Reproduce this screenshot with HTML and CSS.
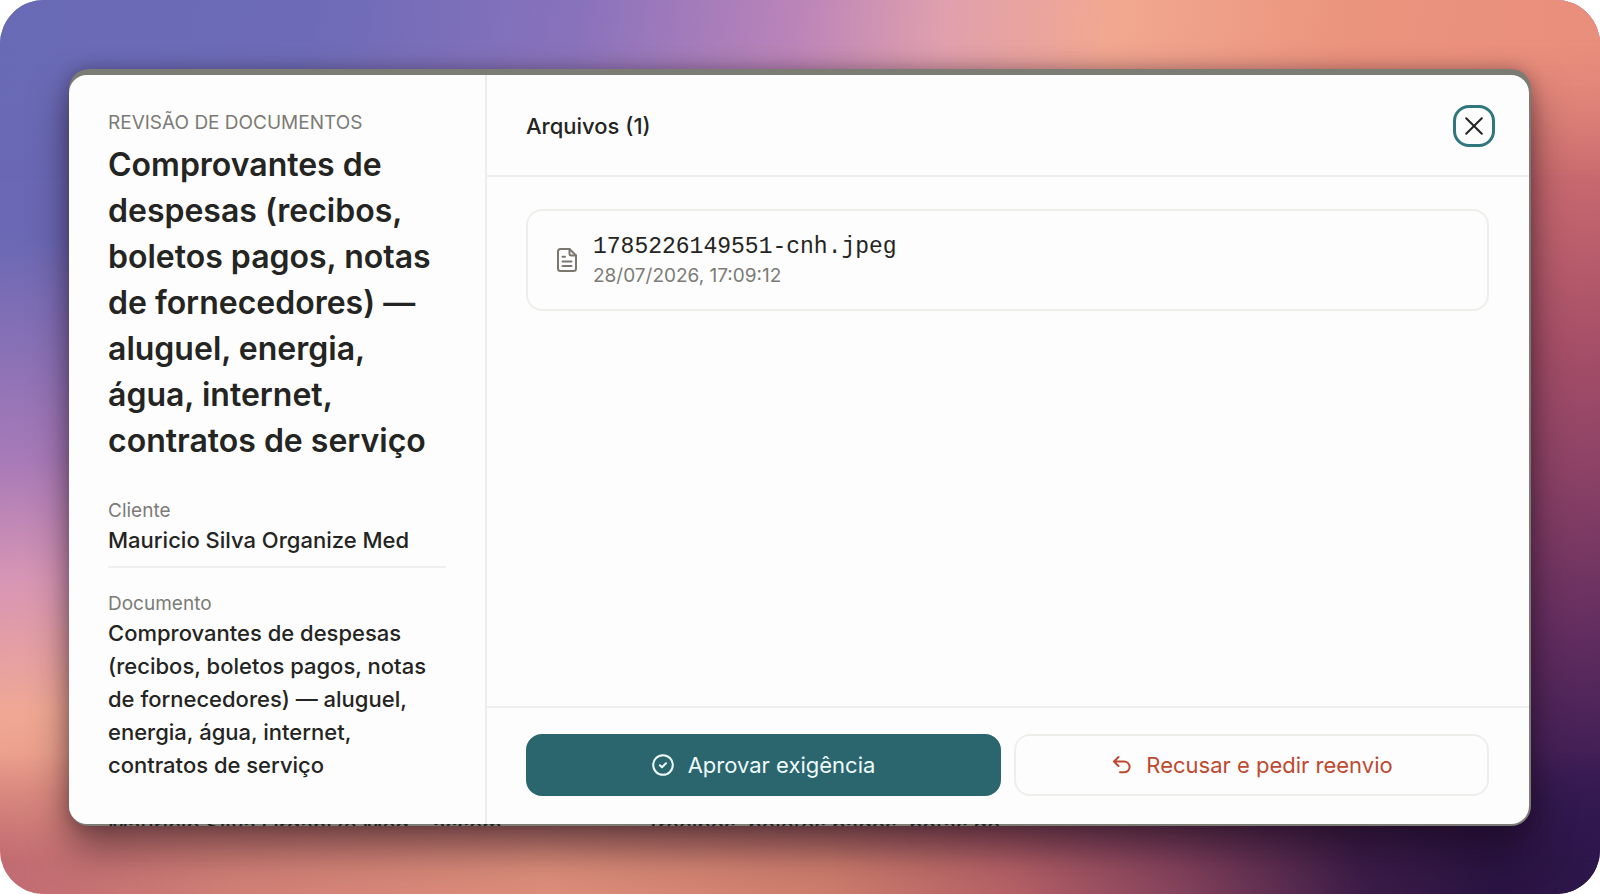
FILE: index.html
```
<!DOCTYPE html>
<html lang="pt-BR">
  <head>
    <meta charset="UTF-8" />
    <meta name="viewport" content="width=device-width, initial-scale=1.0" />
    <title>Revisão de documentos</title>
    <link rel="stylesheet" href="styles.css" />
  </head>
  <body>
    <div class="backdrop">
      <div class="window">
        <!-- row of the list page that stays behind the dialog -->
        <div class="behind" aria-hidden="true">
          <span>Mauricio Silva Organize Med</span>
          <span class="behind-type">assem…</span>
          <span class="behind-doc">(recibos, boletos pagos, notas de</span>
        </div>

        <div class="dialog" role="dialog" aria-labelledby="dialogTitle">
          <aside class="sidebar">
            <p class="eyebrow">REVISÃO DE DOCUMENTOS</p>
            <h1 id="dialogTitle">
              Comprovantes de despesas (recibos, boletos pagos, notas de
              fornecedores) — aluguel, energia, água, internet, contratos de
              serviço
            </h1>
            <dl class="details">
              <div class="detail">
                <dt>Cliente</dt>
                <dd>Mauricio Silva Organize Med</dd>
              </div>
              <div class="detail">
                <dt>Documento</dt>
                <dd>
                  Comprovantes de despesas (recibos, boletos pagos, notas de
                  fornecedores) — aluguel, energia, água, internet, contratos
                  de serviço
                </dd>
              </div>
            </dl>
          </aside>

          <section class="main">
            <header class="header">
              <h2>Arquivos (1)</h2>
              <button type="button" class="close" aria-label="Fechar">
                <svg width="18" height="18" viewBox="0 0 18 18">
                  <path d="M1.2 1.2 16.8 16.8M16.8 1.2 1.2 16.8" />
                </svg>
              </button>
            </header>

            <div class="files">
              <div class="file">
                <svg class="file-icon" width="22" height="26" viewBox="0 0 22 26">
                  <path
                    d="M4.5 2H13.5L20 8.5V21.5A2.5 2.5 0 0 1 17.5 24H4.5A2.5 2.5 0 0 1 2 21.5V4.5A2.5 2.5 0 0 1 4.5 2Z"
                  />
                  <path d="M13.5 2V6.5A2 2 0 0 0 15.5 8.5H20" />
                  <path d="M6.5 9.8H9M6.5 14.5H15.5M6.5 19H15.5" />
                </svg>
                <div>
                  <p class="file-name">1785226149551-cnh.jpeg</p>
                  <p class="file-date">28/07/2026, 17:09:12</p>
                </div>
              </div>
            </div>

            <footer class="actions">
              <button type="button" class="btn approve">
                <svg width="22" height="22" viewBox="0 0 22 22">
                  <circle cx="11" cy="11" r="9.8" />
                  <path d="M7.9 11.2 10 13.2 14 9.2" />
                </svg>
                Aprovar exigência
              </button>
              <button type="button" class="btn reject">
                <svg width="22" height="22" viewBox="0 0 22 22">
                  <path d="M8.5 3 4 7.5 8.5 12M4 7.5H14.2A5.4 5.4 0 0 1 14.2 18.3H10" />
                </svg>
                Recusar e pedir reenvio
              </button>
            </footer>
          </section>
        </div>
      </div>
    </div>
  </body>
</html>
```
FILE: styles.css
```
* {
  margin: 0;
  padding: 0;
  box-sizing: border-box;
}

body {
  background-color: #fff;
  color: #242422;
  font-family: Inter, "Liberation Sans", Arial, sans-serif;
  font-size: 22px;
  line-height: 33px;
}

.backdrop {
  position: relative;
  display: flex;
  min-height: 100vh;
  padding: 69px 69px 68px;
  overflow: hidden;
  border-radius: 44px;
  background: linear-gradient(176deg, #696ab5 0%, #6b68b4 24%, #a87ab8 46%, #d896b4 58%, #f0a894 71%, #dd8878 88%, #c06a72 100%);
}

/* right side and top/bottom colours, faded into the left one */
.backdrop::before,
.backdrop::after {
  content: "";
  position: absolute;
  inset: 0;
}

.backdrop::before {
  background: linear-gradient(172deg, #e88d7c 0%, #e4877a 18%, #cc6c70 34%, #a85068 50%, #8c4266 62%, #642e60 76%, #3a1c54 90%, #2f1850 100%);
  mask-image: linear-gradient(to right, transparent 10%, #000 90%);
}

.backdrop::after {
  background:
    linear-gradient(98deg, #696ab5 0%, #6d6bb7 19%, #8972bc 35%, #bb84b9 48%, #e0a0ad 57%, #f2a890 67%, #eb947d 81%, #e88d7c 100%) top / 100% 50% no-repeat,
    linear-gradient(82deg, #c06a72 0%, #d07f76 14%, #dc8e7a 33%, #cc7c6c 50%, #b46066 61%, #84425c 71%, #3c1c48 82%, #2a1442 90%, #2f1850 100%) bottom / 100% 50% no-repeat;
  mask-image: linear-gradient(to bottom, #000 0, #000 40px, transparent 180px, transparent calc(100% - 140px), #000 calc(100% - 30px));
}

.window {
  position: relative;
  z-index: 1;
  display: flex;
  flex: 1;
  padding: 6px 2px 2px 0;
  border-radius: 20px;
  background-color: #7b7c74;
  box-shadow: 0 22px 38px rgba(20, 5, 20, 0.5), 0 0 16px rgba(20, 5, 20, 0.25);
}

.behind {
  position: absolute;
  right: 0;
  bottom: 0;
  left: 39px;
  display: flex;
  height: 16px;
  overflow: hidden;
  color: #242422;
  font-weight: 500;
  white-space: nowrap;
}

.behind-type {
  margin-left: 24px;
}

.behind-doc {
  margin-left: 128px;
}

.dialog {
  position: relative;
  display: flex;
  flex: 1;
  border-radius: 18px;
  background-color: #fdfdfd;
}

.sidebar {
  width: 418px;
  padding: 35px 39px 32px;
  border-right: 2px solid #ededeb;
}

.eyebrow,
dt,
.file-date {
  color: #7c7b76;
  font-size: 19px;
  line-height: 26px;
}

h1 {
  margin-top: 6px;
  font-size: 32px;
  font-weight: 600;
  line-height: 46px;
}

.details {
  margin-top: 34px;
}

.detail {
  padding-bottom: 9px;
  border-bottom: 2px solid #f0f0ee;
}

.detail + .detail {
  padding-top: 23px;
  border-bottom: none;
}

dd,
h2 {
  font-size: 22px;
  font-weight: 500;
  line-height: 33px;
}

.main {
  display: flex;
  flex: 1;
  flex-direction: column;
}

.header {
  display: flex;
  align-items: center;
  justify-content: space-between;
  padding: 30px 34px 28px 39px;
  border-bottom: 2px solid #efefed;
}

button {
  font-family: inherit;
  cursor: pointer;
}

svg {
  flex-shrink: 0;
  fill: none;
  stroke: currentColor;
  stroke-linecap: round;
  stroke-linejoin: round;
  stroke-width: 2;
}

.close {
  display: flex;
  align-items: center;
  justify-content: center;
  width: 42px;
  height: 42px;
  border: 3px solid #2f777c;
  border-radius: 16px;
  background-color: #fdfdfd;
  color: #242422;
}

.files {
  flex: 1;
  padding: 32px 40px 32px 39px;
}

.file {
  display: flex;
  align-items: center;
  gap: 15px;
  padding: 20px 28px;
  border: 2px solid #eeeeeb;
  border-radius: 16px;
}

.file-icon {
  color: #7c776e;
}

.file-name {
  font-family: "Liberation Mono", monospace;
  font-size: 23px;
  line-height: 32px;
}

.actions {
  display: flex;
  gap: 13px;
  padding: 26px 40px 28px 39px;
  border-top: 2px solid #efefed;
}

.btn {
  display: flex;
  flex: 1;
  align-items: center;
  justify-content: center;
  gap: 14px;
  height: 62px;
  border: 2px solid #eeeeeb;
  border-radius: 16px;
  background-color: #fdfdfd;
  font-size: 22px;
}

.approve {
  border-color: #2b666e;
  background-color: #2b666e;
  color: #eefafa;
}

.reject {
  color: #bd4a30;
}
```
